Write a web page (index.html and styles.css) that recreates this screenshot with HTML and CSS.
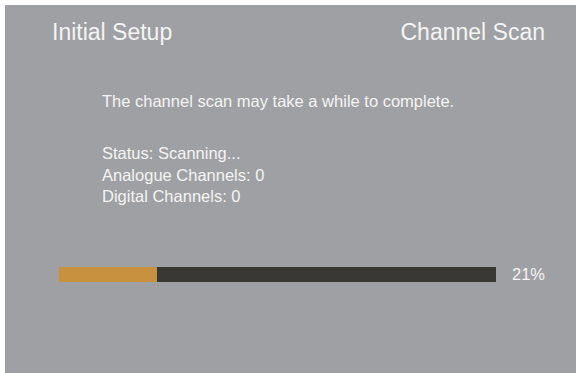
FILE: index.html
```html
<!DOCTYPE html>
<html>
<head>
<meta charset="utf-8">
<link rel="stylesheet" href="styles.css">
</head>
<body>
<div class="panel">
  <div class="header">
    <span class="title">Initial Setup</span>
    <span class="title">Channel Scan</span>
  </div>
  <div class="content">
    <p class="note">The channel scan may take a while to complete.</p>
    <div class="status">
      <div>Status: Scanning...</div>
      <div>Analogue Channels: 0</div>
      <div>Digital Channels: 0</div>
    </div>
  </div>
  <div class="progress-row">
    <div class="bar"><div class="fill" style="width:22.4%"></div></div>
    <span class="pct">21%</span>
  </div>
</div>
</body>
</html>
```
FILE: styles.css
```css
html, body {
  margin: 0;
  padding: 0;
  background: #ffffff;
}
body {
  padding: 5px 0 0 5px;
  width: 576px;
  height: 373px;
  box-sizing: border-box;
  overflow: hidden;
}
.panel {
  background: #9fa0a3;
  height: 368px;
  font-family: "Liberation Sans", Arial, sans-serif;
  color: #f4f4f4;
  display: flex;
  flex-direction: column;
}
.header {
  display: flex;
  justify-content: space-between;
  padding: 14px 31px 0 47px;
}
.title {
  font-size: 23px;
  line-height: 26px;
}
.content {
  padding: 46px 0 0 97px;
}
.note {
  margin: 0;
  font-size: 16.5px;
  line-height: 20px;
}
.status {
  margin-top: 32px;
  font-size: 16.5px;
  line-height: 21.5px;
}
.progress-row {
  display: flex;
  align-items: center;
  padding: 59px 0 0 54px;
}
.bar {
  width: 437px;
  height: 15px;
  background: #3a3835;
}
.fill {
  height: 100%;
  background: #c8913f;
}
.pct {
  margin-left: 16px;
  font-size: 16.5px;
  line-height: 15px;
}
```
